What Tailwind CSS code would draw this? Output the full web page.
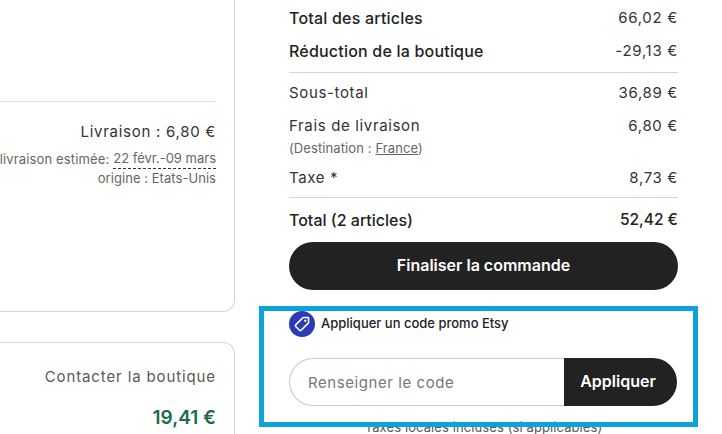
<!DOCTYPE html>
<html>
<head>
<meta charset="utf-8">
<script src="https://cdn.jsdelivr.net/npm/@tailwindcss/browser@4"></script>
</head>
<body class="bg-white">
<div class="relative flex w-[722px] h-[434px] overflow-hidden bg-white font-['Inter',sans-serif] text-[#222222]">
  <!-- left column -->
  <div class="w-[235px] shrink-0 flex flex-col gap-[30px]">
    <div class="h-[312px] shrink-0 border-r border-b border-[#d4d4d4] rounded-br-[12px] pr-[18px] pt-[101px]">
      <div class="border-t border-[#dddddd] pt-[20px] text-right">
        <p class="text-[15px] leading-[20px] tracking-[0.72px] text-[#333333]">Livraison : 6,80 €</p>
        <p class="mt-[8px] text-[13px] leading-[19px] text-[#666666] whitespace-nowrap flex justify-end">
          <span class="tracking-[0.15px]">livraison estimée:&nbsp;</span><span class="border-b border-dashed border-[#333333] leading-[17px]">22 févr.-09 mars</span>
        </p>
        <p class="text-[13px] leading-[18px] tracking-[0.05px] text-[#666666]">origine : Etats-Unis</p>
      </div>
    </div>
    <div class="h-[100px] shrink-0 border-t border-r border-[#d4d4d4] rounded-tr-[12px] pr-[18px] pt-[24px] text-right">
      <p class="text-[15px] leading-[20px] tracking-[0.88px] text-[#595959]">Contacter la boutique</p>
      <p class="mt-[20px] text-[19px] leading-[22px] font-semibold text-[#1c6b4a]">19,41 €</p>
    </div>
  </div>

  <!-- right column -->
  <div class="w-[389px] shrink-0 ml-[54px] pt-[8px]">
    <div class="flex justify-between h-[20px] items-center text-[16px] tracking-[0.2px] font-medium"><span>Total des articles</span><span class="text-[15px] font-normal text-[#333333] tracking-[0.7px]">66,02 €</span></div>
    <div class="flex justify-between h-[20px] items-center mt-[13px] text-[16px] tracking-[0.2px] font-medium"><span>Réduction de la boutique</span><span class="text-[15px] font-normal text-[#333333] tracking-[0.7px]">-29,13 €</span></div>
    <div class="mt-[11px] border-t border-[#d4d4d4]"></div>
    <div class="flex justify-between h-[20px] items-center mt-[10px] text-[15px] text-[#333333] tracking-[0.65px]"><span>Sous-total</span><span>36,89 €</span></div>
    <div class="flex justify-between h-[20px] items-center mt-[13px] text-[15px] text-[#333333] tracking-[0.65px]"><span>Frais de livraison</span><span>6,80 €</span></div>
    <p class="mt-[2px] h-[20px] text-[13px] leading-[20px] tracking-[0.1px] text-[#666666]">(Destination : <span class="underline">France</span>)</p>
    <div class="flex justify-between h-[20px] items-center mt-[10px] text-[15px] text-[#333333] tracking-[0.65px]"><span>Taxe *</span><span>8,73 €</span></div>
    <div class="mt-[9px] border-t border-[#d4d4d4]"></div>
    <div class="flex justify-between h-[20px] items-center mt-[12px] text-[16px] font-medium"><span>Total (2 articles)</span><span class="text-[15.5px]">52,42 €</span></div>
    <button class="block w-full h-[48px] mt-[12px] pb-[2px] rounded-full bg-[#222222] text-white text-[16px] font-semibold">Finaliser la commande</button>

    <div class="flex items-center gap-[6px] mt-[21px] h-[26px]">
      <span class="flex items-center justify-center w-[26px] h-[26px] rounded-full bg-[#2a3bb5]">
        <svg width="18" height="18" viewBox="0 0 16 16" fill="none" stroke="white" stroke-width="1.4" stroke-linejoin="round"><path d="M9 2.2h4.8v4.8L7.2 13.6a1 1 0 0 1-1.4 0L2.4 10.2a1 1 0 0 1 0-1.4z"/><circle cx="10.9" cy="5.1" r="0.7" fill="white" stroke-width="0.8"/></svg>
      </span>
      <span class="text-[13px] font-medium text-[#222222]">Appliquer un code promo Etsy</span>
    </div>

    <div class="flex h-[48px] mt-[21px] mr-[1px]">
      <div class="flex-1 flex items-center pl-[18px] pt-[2px] border border-r-0 border-[#c8c8c8] rounded-l-full text-[15px] tracking-[0.57px] text-[#777777]">Renseigner le code</div>
      <button class="w-[113px] bg-[#222222] rounded-r-full text-white text-[16px] font-semibold pr-[5px] pb-[2px]">Appliquer</button>
    </div>
    <p class="mt-[13px] text-center text-[13px] leading-[16px] tracking-[0.1px] text-[#595959] whitespace-nowrap">Taxes locales incluses (si applicables)</p>
  </div>

  <!-- highlight rectangle drawn over the page -->
  <div class="absolute left-[259px] top-[306px] w-[439px] h-[121px] border-[5px] border-[#0ca3dc]"></div>
</div>
</body>
</html>
